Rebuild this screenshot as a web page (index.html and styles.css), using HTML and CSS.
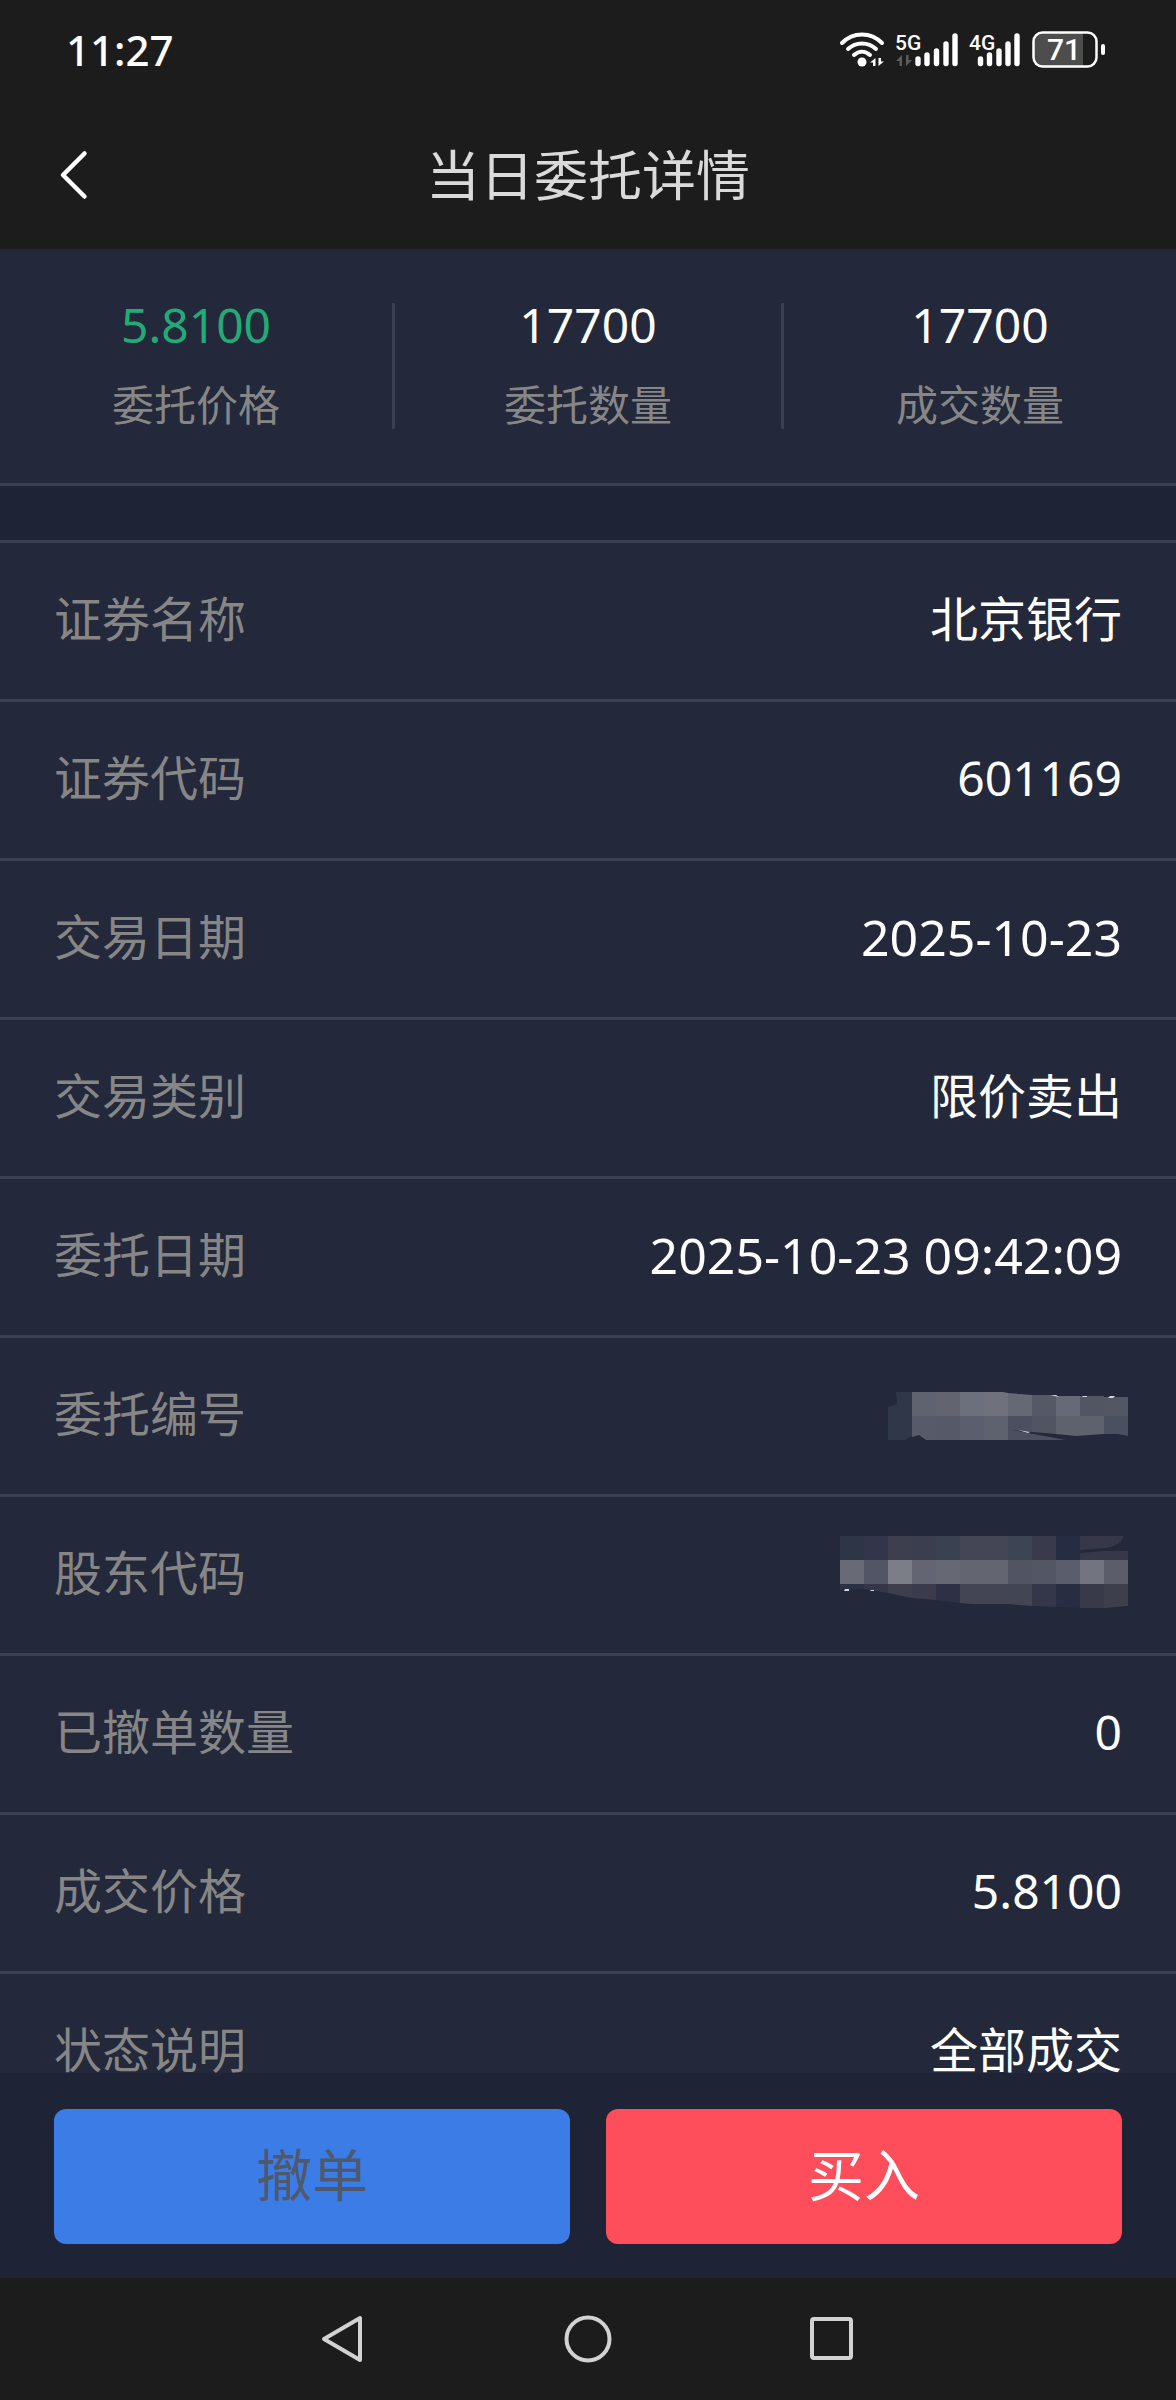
FILE: index.html
```html
<!DOCTYPE html>
<html lang="zh-CN">
  <head>
    <meta charset="UTF-8" />
    <meta name="viewport" content="width=device-width, initial-scale=1.0" />
    <title>当日委托详情</title>
    <link rel="stylesheet" href="styles.css">
  </head>
  <body>
    <div class="status-bar">
      <span class="time">11:27</span>
      <svg class="status-icons" width="272" height="48" viewBox="0 0 272 48">
        <!-- wifi -->
        <g fill="none" stroke="#fff" stroke-width="4" stroke-linecap="round">
          <path d="M6 17C17 5.500 35 5.500 46 17" />
          <path d="M12 23C20 15.500 32 15.500 40 23" />
          <path d="M18 29C23 24.500 29 24.500 34 29" />
        </g>
        <circle cx="26" cy="36" r="4.500" fill="#fff" />
        <path d="M34 36.500L39.500 32V40H37V36.500ZM48 35.500L42.500 40V32H45V35.500Z" fill="#fff" />

        <!-- 5G -->
        <text class="net" x="59" y="24">5G</text>
        <path d="M60 35L66 29V40H63.500V35ZM76 34L70 40V29H72.500V34Z" fill="#5c5c5c" />
        <g stroke="#fff" stroke-width="5.400" stroke-linecap="round">
          <path d="M82 33V37.500M91 29V37.500M100.500 25V37.500M110 18V37.500M119 10V37.500" />
        </g>

        <!-- 4G -->
        <text class="net" x="133" y="24">4G</text>
        <g stroke="#fff" stroke-width="5.400" stroke-linecap="round">
          <path d="M144.500 33V37.500M153.500 29V37.500M163 25V37.500M172 18V37.500M181 10V37.500" />
        </g>

        <!-- battery -->
        <path d="M207 7H247V40H207Q198 40 198 31V16Q198 7 207 7Z" fill="#4d4d4d" />
        <rect x="197.500" y="6.500" width="63" height="34" rx="9" fill="none" stroke="#fff" stroke-width="2.500" />
        <rect x="265" y="18" width="4" height="11" rx="2" fill="#fff" />
        <text class="battery" x="228" y="34">71</text>
      </svg>
    </div>

    <header class="header">
      <button class="back" type="button" aria-label="返回">
        <svg width="32" height="52" viewBox="0 0 32 52">
          <path d="M26.500 4.500L5 26L26.500 47.500" fill="none" stroke="#fff" stroke-width="4.500" stroke-linecap="round" stroke-linejoin="round" />
        </svg>
      </button>
      <h1>当日委托详情</h1>
    </header>

    <main class="content">
      <section class="summary">
        <div class="summary-item">
          <strong class="green">5.8100</strong>
          <span>委托价格</span>
        </div>
        <div class="summary-item">
          <strong>17700</strong>
          <span>委托数量</span>
        </div>
        <div class="summary-item">
          <strong>17700</strong>
          <span>成交数量</span>
        </div>
      </section>

      <dl class="details">
        <div class="row">
          <dt>证券名称</dt>
          <dd>北京银行</dd>
        </div>
        <div class="row">
          <dt>证券代码</dt>
          <dd>601169</dd>
        </div>
        <div class="row">
          <dt>交易日期</dt>
          <dd class="date">2025-10-23</dd>
        </div>
        <div class="row">
          <dt>交易类别</dt>
          <dd>限价卖出</dd>
        </div>
        <div class="row">
          <dt>委托日期</dt>
          <dd class="date">2025-10-23 09:42:09</dd>
        </div>
        <div class="row">
          <dt>委托编号</dt>
          <dd class="masked">
            <svg width="240" height="48" viewBox="0 0 240 48">
              <path d="M8 0H24V44L17 48H0V15L9 12Z" fill="#303748" />
              <path d="M24 0H48V24H24Z" fill="#5f636f" />
              <path d="M48 0H72V24H48Z" fill="#62656f" />
              <path d="M72 0H96V24H72Z" fill="#6c707c" />
              <path d="M96 0H115L120 1V24H96Z" fill="#6f717c" />
              <path d="M120 1L144 3V24H120Z" fill="#656974" />
              <path d="M144 3H162L168 4V24H144Z" fill="#555867" />
              <path d="M168 4H192V24H168Z" fill="#666a76" />
              <path d="M192 4H216V24H192Z" fill="#525564" />
              <path d="M216 5H240V24H216Z" fill="#535664" />
              <path d="M24 24H48V48H38L31 43L24 45Z" fill="#565a69" />
              <path d="M48 24H72V48H48Z" fill="#555968" />
              <path d="M72 24H96V48H72Z" fill="#5b5f6d" />
              <path d="M96 24H120V48H96Z" fill="#5e616e" />
              <path d="M120 24H144V40L124 38L178 48H120Z" fill="#4c4f5f" />
              <path d="M144 24H168V42L144 40Z" fill="#505463" />
              <path d="M168 24H216V42L188 44L168 42Z" fill="#5d626c" />
              <path d="M216 24H240V44L230 42H216Z" fill="#4a505f" />
              <path d="M162 3H168L171 5ZM195 4H199V5H194ZM222 4H227L225 6H220ZM130 38L142 40L140 41Z" fill="#d5d7dd" />
            </svg>
          </dd>
        </div>
        <div class="row">
          <dt>股东代码</dt>
          <dd class="masked">
            <svg width="288" height="78" viewBox="0 0 288 78">
              <path d="M0 0H24V24H0Z" fill="#2e3546" />
              <path d="M24 0H48V24H24Z" fill="#33364a" />
              <path d="M48 0H72V24H48Z" fill="#3d3f4f" />
              <path d="M72 0H96V24H72Z" fill="#3a3e4f" />
              <path d="M96 0H120V24H96Z" fill="#3a4151" />
              <path d="M120 0H168V24H120Z" fill="#444656" />
              <path d="M168 0H192V24H168Z" fill="#3d4453" />
              <path d="M192 0H216V24H192Z" fill="#393a4c" />
              <path d="M216 0H240V24H216Z" fill="#262c42" />
              <path d="M240 0H284Q280 10 266 12L240 14ZM240 17L264 15H288V24H240Z" fill="#363749" />
              <path d="M0 24H24V48H0Z" fill="#686b76" />
              <path d="M24 24H48V48H24Z" fill="#525565" />
              <path d="M48 24H72V48H48Z" fill="#7b7d87" />
              <path d="M72 24H96V48H72Z" fill="#636672" />
              <path d="M96 24H120V48H96Z" fill="#666973" />
              <path d="M120 24H168V48H120Z" fill="#636670" />
              <path d="M168 24H192V48H168Z" fill="#515463" />
              <path d="M192 24H216V48H192Z" fill="#535665" />
              <path d="M216 24H240V48H216Z" fill="#5a5d6b" />
              <path d="M240 24H264V48H240Z" fill="#72747f" />
              <path d="M264 24H288V48H264Z" fill="#5b5e6a" />
              <path d="M0 48H24V53L0 54Z" fill="#2a3144" />
              <path d="M24 48H48V57L24 53Z" fill="#34374a" />
              <path d="M48 48H72V62L48 57Z" fill="#3d3f4f" />
              <path d="M72 48H96V64L72 62Z" fill="#3a3c4d" />
              <path d="M96 48H120V67L96 64Z" fill="#2e3146" />
              <path d="M120 48H168V68H132L120 67Z" fill="#434555" />
              <path d="M168 48H192V70L168 68Z" fill="#424654" />
              <path d="M192 48H216V71L192 70Z" fill="#34364a" />
              <path d="M216 48H240V72L216 71Z" fill="#282d42" />
              <path d="M240 48H264V72H240Z" fill="#383a4a" />
              <path d="M264 48H288V70L264 72Z" fill="#3d3f4d" />
              <path d="M5 53H9V55H4ZM30 54H34V55H31Z" fill="#d5d7dd" />
            </svg>
          </dd>
        </div>
        <div class="row">
          <dt>已撤单数量</dt>
          <dd>0</dd>
        </div>
        <div class="row">
          <dt>成交价格</dt>
          <dd>5.8100</dd>
        </div>
        <div class="row">
          <dt>状态说明</dt>
          <dd>全部成交</dd>
        </div>
      </dl>
    </main>

    <footer class="actions">
      <button class="btn cancel" type="button" disabled>撤单</button>
      <button class="btn buy" type="button">买入</button>
    </footer>

    <nav class="nav-bar">
      <button type="button" aria-label="返回">
        <svg width="48" height="48" viewBox="0 0 48 48">
          <path d="M40 3V45L4 24Z" fill="none" stroke="#d2d2d2" stroke-width="4" stroke-linejoin="round" />
        </svg>
      </button>
      <button type="button" aria-label="主页">
        <svg width="48" height="48" viewBox="0 0 48 48">
          <circle cx="24" cy="24" r="21.500" fill="none" stroke="#d2d2d2" stroke-width="4" />
        </svg>
      </button>
      <button type="button" aria-label="最近任务">
        <svg width="48" height="48" viewBox="0 0 48 48">
          <rect x="4" y="4" width="39" height="39" rx="2" fill="none" stroke="#d2d2d2" stroke-width="4" />
        </svg>
      </button>
    </nav>
  </body>
</html>
```
FILE: styles.css
```css
* {
  box-sizing: border-box;
}
body {
  display: flex;
  flex-direction: column;
  height: 100vh;
  margin: 0;
  background: #1f2336;
  color: #fff;
  font-family: "Noto Sans", "Noto Sans CJK SC", sans-serif;
}
button {
  padding: 0;
  border: none;
  background: none;
  font-family: inherit;
  cursor: pointer;
}
svg {
  display: block;
}
.status-bar {
  display: flex;
  flex-shrink: 0;
  justify-content: space-between;
  align-items: center;
  height: 100px;
  padding: 0 68px 0 66px;
  background: #1c1c1c;
}
.time {
  font-size: 42px;
  line-height: 64px;
  font-weight: 500;
}
.status-icons text {
  fill: #fff;
  font-family: Roboto, sans-serif;
  font-weight: 500;
}
.status-icons .net {
  font-size: 21px;
}
.status-icons .battery {
  font-size: 30px;
  text-anchor: middle;
}
.header {
  display: grid;
  grid-template-columns: 60px 1fr 60px;
  flex-shrink: 0;
  align-items: center;
  height: 149px;
  padding: 0 58px;
  background: #1c1c1c;
}
.header h1 {
  margin: 0;
  color: #dadada;
  font-size: 54px;
  line-height: 80px;
  font-weight: 400;
  text-align: center;
}
.content {
  flex: 1;
  min-height: 0;
  overflow-y: auto;
  scrollbar-width: none;
}
.summary {
  display: grid;
  grid-template-columns: repeat(3, 1fr);
  padding: 54px 0;
  background: #23283a;
  border-bottom: 3px solid #3b3f52;
}
.summary-item {
  display: flex;
  flex-direction: column;
  align-items: center;
  height: 126px;
}
.summary-item:nth-child(2) {
  border-left: 3px solid #3b3f52;
  border-right: 3px solid #3b3f52;
}
.summary-item strong {
  margin-bottom: 34px;
  font-size: 48px;
  line-height: 44px;
  font-weight: 400;
}
.summary-item .green {
  color: #22ab78;
}
.summary-item span {
  color: #868686;
  font-size: 42px;
  line-height: 48px;
}
.details {
  margin: 54px 0 0;
  background: #23283a;
}
.row {
  display: flex;
  justify-content: space-between;
  align-items: center;
  height: 159px;
  padding: 0 54px;
  border-top: 3px solid #3b3f52;
}
.row dt,
.row dd {
  margin: 0;
  padding-bottom: 5px;
  font-size: 48px;
  line-height: 72px;
}
.row dt {
  color: #868686;
}
.row .date {
  font-size: 50px;
}
.row .masked {
  margin-right: -6px;
  padding: 0;
}
.actions {
  display: flex;
  flex-shrink: 0;
  gap: 36px;
  padding: 36px 54px 34px;
  background: #1f2336;
}
.btn {
  flex: 1;
  height: 135px;
  padding-bottom: 10px;
  border-radius: 12px;
  color: #fff;
  font-size: 56px;
}
.cancel {
  background: #3b7ce6;
  color: #50596a;
}
.buy {
  background: #ff4e5b;
}
.nav-bar {
  display: flex;
  flex-shrink: 0;
  justify-content: center;
  align-items: center;
  gap: 196px;
  height: 122px;
  background: #1c1c1c;
}
```
